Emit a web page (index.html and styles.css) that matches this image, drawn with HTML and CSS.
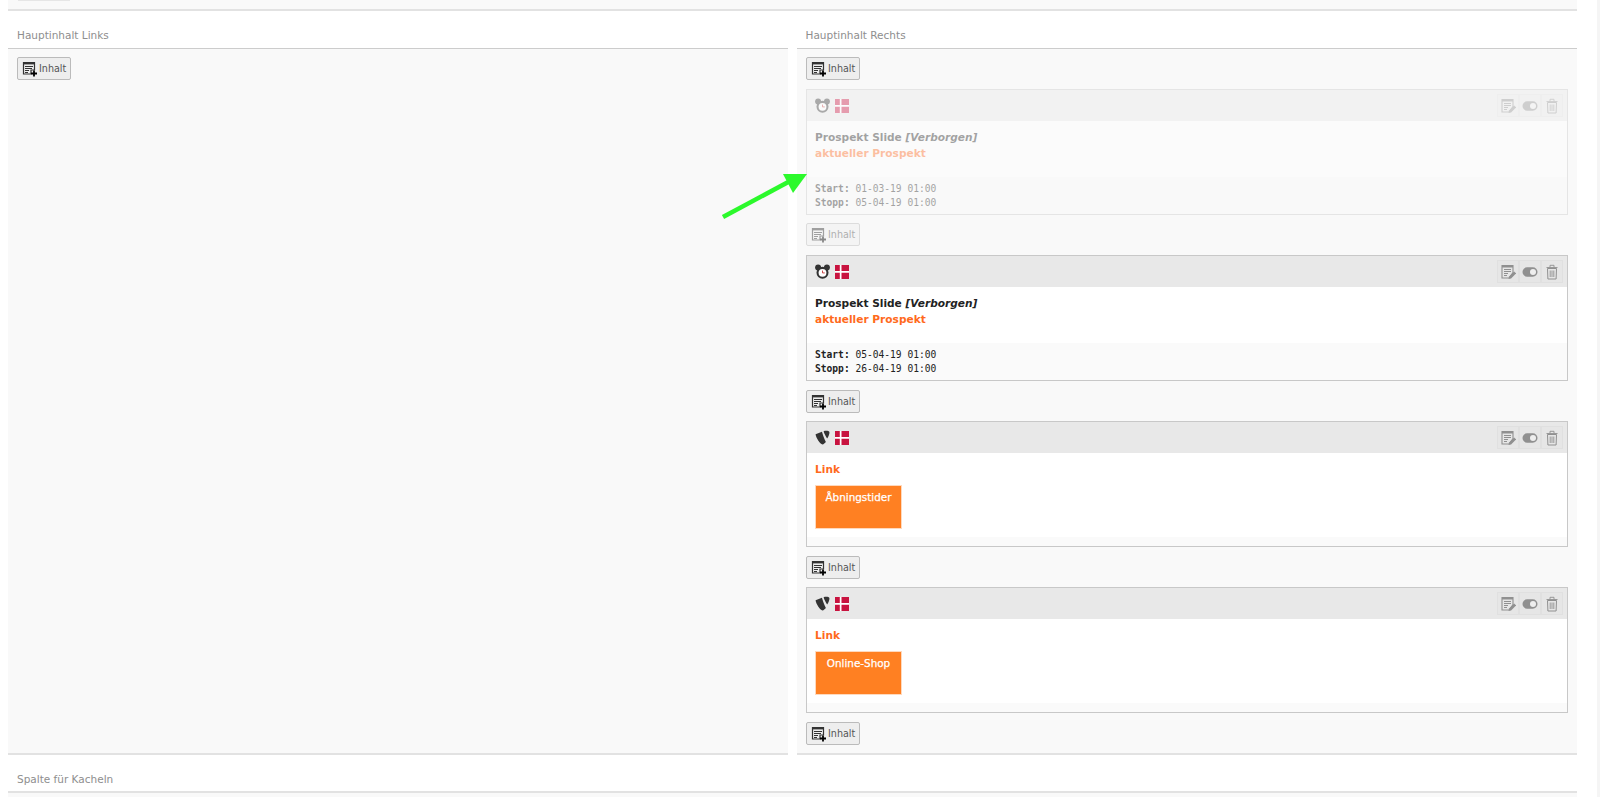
FILE: index.html
```html
<!DOCTYPE html>
<html lang="de">
<head>
<meta charset="utf-8">
<title>Seite</title>
<link rel="stylesheet" href="styles.css">
</head>
<body>
<svg class="defs" width="0" height="0" aria-hidden="true">
  <symbol id="i-add" viewBox="0 0 16 16">
    <path d="M1.500 1.500h11v7.500H9v4H1.500z" fill="none" stroke="currentColor" stroke-width="1.200"/>
    <path d="M1.500 1h11v2.400h-11z" fill="currentColor"/>
    <path d="M3 5.500h8M3 7.500h7M3 9.500h4M3 11.500h3" stroke="currentColor" stroke-width="1"/>
    <path d="M12 9.500v6M9 12.500h6" stroke="#000" stroke-width="1.800"/>
  </symbol>
  <symbol id="i-clock" viewBox="0 0 16 16">
    <circle cx="3.300" cy="3.700" r="3.200" fill="currentColor"/>
    <circle cx="12.700" cy="3.700" r="3.200" fill="currentColor"/>
    <circle cx="8" cy="9.400" r="6.400" fill="currentColor"/>
    <circle cx="8" cy="9.400" r="4.200" fill="#fff"/>
    <path d="M8 7v2.500h2.400" fill="none" stroke="#c83c3c" stroke-width="1"/>
  </symbol>
  <symbol id="i-typo" viewBox="0 0 16 16">
    <path d="M.6 4.600 7.400 1.800c.8 2.700 2.500 7.700 4.200 11-1 1-2.400 2.600-3.600 2.600C5.400 15.400.9 8 .6 4.600z" fill="currentColor"/>
    <path d="M9.200 1.200c2-.5 6-.5 6.200 1.100.1 1.600-1.200 5.200-2.500 6.800C11.400 6.800 9.600 3.200 9.200 1.200z" fill="currentColor"/>
  </symbol>
  <symbol id="i-flag" viewBox="0 0 14 14">
    <rect width="14" height="14" fill="#c8133f"/>
    <path d="M4.800 0h1.700v14H4.800zM0 6.100h14v1.700H0z" fill="#fff"/>
  </symbol>
  <symbol id="i-edit" viewBox="0 0 16 16">
    <path d="M2 1.500h11v7l-4 5.500H2z" fill="none" stroke="currentColor" stroke-width="1.100"/>
    <path d="M2 1.500h11v2H2z" fill="currentColor"/>
    <path d="M4 5.500h7M4 7.500h7M4 9.500h4M4 11.500h3" stroke="currentColor" stroke-width="1"/>
    <path d="M8.500 15l.6-2.600 5-5 2 2-5 5z" fill="currentColor"/>
  </symbol>
  <symbol id="i-toggle" viewBox="0 0 16 16">
    <rect x=".5" y="3.300" width="15" height="9.400" rx="4.700" fill="currentColor"/>
    <circle cx="11" cy="8" r="3" fill="#eee"/>
  </symbol>
  <symbol id="i-trash" viewBox="0 0 16 16">
    <path d="M3.500 4.500h9l-.4 10.500H3.900z" fill="none" stroke="currentColor" stroke-width="1"/>
    <path d="M2.500 3.500h11M6 3.300V1.300h4v2M6.200 6.500v6.500M8 6.500v6.500M9.800 6.500v6.500" fill="none" stroke="currentColor" stroke-width=".9"/>
  </symbol>
</svg>

<div class="page">
  <main class="main">
    <div class="prev-row"><span class="prev-btn"></span></div>

    <div class="columns">
      <section class="col">
        <h2 class="col-title">Hauptinhalt Links</h2>
        <div class="col-body">
          <button class="add-btn"><svg class="add-icon"><use href="#i-add"/></svg>Inhalt</button>
        </div>
      </section>

      <section class="col">
        <h2 class="col-title">Hauptinhalt Rechts</h2>
        <div class="col-body">
          <button class="add-btn"><svg class="add-icon"><use href="#i-add"/></svg>Inhalt</button>

          <article class="card is-hidden">
            <header class="card-head">
              <svg class="type-icon"><use href="#i-clock"/></svg>
              <svg class="flag"><use href="#i-flag"/></svg>
              <div class="actions">
                <span class="action"><svg><use href="#i-edit"/></svg></span>
                <span class="action"><svg><use href="#i-toggle"/></svg></span>
                <span class="action"><svg><use href="#i-trash"/></svg></span>
              </div>
            </header>
            <div class="card-body">
              <div class="text-block">
                <div class="title">Prospekt Slide <em>[Verborgen]</em></div>
                <div class="subtitle">aktueller Prospekt</div>
              </div>
            </div>
            <footer class="card-foot">
              <div class="sched"><strong>Start:</strong> 01-03-19 01:00</div>
              <div class="sched"><strong>Stopp:</strong> 05-04-19 01:00</div>
            </footer>
          </article>
          <button class="add-btn is-faded"><svg class="add-icon"><use href="#i-add"/></svg>Inhalt</button>

          <article class="card">
            <header class="card-head">
              <svg class="type-icon"><use href="#i-clock"/></svg>
              <svg class="flag"><use href="#i-flag"/></svg>
              <div class="actions">
                <span class="action"><svg><use href="#i-edit"/></svg></span>
                <span class="action"><svg><use href="#i-toggle"/></svg></span>
                <span class="action"><svg><use href="#i-trash"/></svg></span>
              </div>
            </header>
            <div class="card-body">
              <div class="text-block">
                <div class="title">Prospekt Slide <em>[Verborgen]</em></div>
                <div class="subtitle">aktueller Prospekt</div>
              </div>
            </div>
            <footer class="card-foot">
              <div class="sched"><strong>Start:</strong> 05-04-19 01:00</div>
              <div class="sched"><strong>Stopp:</strong> 26-04-19 01:00</div>
            </footer>
          </article>
          <button class="add-btn"><svg class="add-icon"><use href="#i-add"/></svg>Inhalt</button>

          <article class="card">
            <header class="card-head">
              <svg class="type-icon"><use href="#i-typo"/></svg>
              <svg class="flag"><use href="#i-flag"/></svg>
              <div class="actions">
                <span class="action"><svg><use href="#i-edit"/></svg></span>
                <span class="action"><svg><use href="#i-toggle"/></svg></span>
                <span class="action"><svg><use href="#i-trash"/></svg></span>
              </div>
            </header>
            <div class="card-body">
              <div class="text-block"><div class="subtitle">Link</div></div>
              <div class="tile">Åbningstider</div>
            </div>
            <footer class="card-foot"></footer>
          </article>
          <button class="add-btn"><svg class="add-icon"><use href="#i-add"/></svg>Inhalt</button>

          <article class="card">
            <header class="card-head">
              <svg class="type-icon"><use href="#i-typo"/></svg>
              <svg class="flag"><use href="#i-flag"/></svg>
              <div class="actions">
                <span class="action"><svg><use href="#i-edit"/></svg></span>
                <span class="action"><svg><use href="#i-toggle"/></svg></span>
                <span class="action"><svg><use href="#i-trash"/></svg></span>
              </div>
            </header>
            <div class="card-body">
              <div class="text-block"><div class="subtitle">Link</div></div>
              <div class="tile">Online-Shop</div>
            </div>
            <footer class="card-foot"></footer>
          </article>
          <button class="add-btn"><svg class="add-icon"><use href="#i-add"/></svg>Inhalt</button>
        </div>
      </section>
    </div>

    <section class="full-col">
      <h2 class="col-title">Spalte für Kacheln</h2>
      <div class="full-body"></div>
    </section>
  </main>
  <div class="rail"></div>
</div>

<svg class="arrow" width="100" height="60" viewBox="0 0 100 60" aria-hidden="true">
  <path d="M23 57 92 20" stroke="#2cf92c" stroke-width="4.600" fill="none"/>
  <path d="M83 14h24L93 33z" fill="#2cf92c"/>
</svg>
</body>
</html>
```

FILE: styles.css
```css
* { box-sizing: border-box; }
html, body { margin: 0; height: 100%; overflow: hidden; background: #fff; }
body {
  position: relative;
  font-family: "DejaVu Sans", Verdana, sans-serif;
  font-size: 11px;
  color: #333;
}
.defs { position: absolute; }

.page { display: flex; height: 797px; }
.main { width: 1597px; padding: 0 20px 0 8px; display: flex; flex-direction: column; }
.rail { width: 3px; background: #f5f5f5; }

.prev-row { height: 11px; flex: none; background: #f9f9f9; border-bottom: 2px solid #e2e2e2; padding-left: 10px; }
.prev-btn { display: block; width: 52px; height: 1px; background: #e6e6e6; }

.columns { display: grid; grid-template-columns: 780px 780px; grid-template-rows: 744px; column-gap: 9px; flex: none; }
.col { display: flex; flex-direction: column; min-height: 0; }
.col-title {
  margin: 0;
  height: 38px;
  flex: none;
  padding: 18px 0 0 9px;
  font-size: 10.500px;
  font-weight: 400;
  line-height: 13px;
  color: #8e8e8e;
  border-bottom: 1px solid #ccc;
}
.col + .col .col-title { padding-left: 8.500px; }
.col-body {
  flex: 1;
  min-height: 0;
  background: #f9f9f9;
  border-bottom: 2px solid #e2e2e2;
  padding: 8px 9px 0;
  display: flex;
  flex-direction: column;
  align-items: flex-start;
}

.full-col { flex: 1; display: flex; flex-direction: column; }
.full-col .col-title { border-bottom: 2px solid #e2e2e2; }
.full-body { flex: 1; background: #f9f9f9; }

.add-btn {
  display: flex;
  align-items: center;
  width: 54px;
  height: 23px;
  flex: none;
  margin: 0 0 8px;
  padding: 0 0 0 4px;
  border: 1px solid #bbb;
  border-radius: 2px;
  background: #eee;
  color: #555;
  font-family: inherit;
  font-size: 9.600px;
  line-height: 1;
}
.add-btn:first-child, .add-btn.is-faded { margin-bottom: 9px; }
.add-btn.is-faded { opacity: .45; }
.add-icon { width: 16px; height: 16px; margin-right: 1px; color: #333; flex: none; }

.card {
  width: 762px;
  height: 126px;
  flex: none;
  margin-bottom: 9px;
  border: 1px solid #c8c8c8;
  background: #fff;
  display: flex;
  flex-direction: column;
}
.card.is-hidden { opacity: .4; margin-bottom: 8px; }

.card-head {
  height: 31px;
  flex: none;
  background: #e8e8e8;
  display: flex;
  align-items: center;
  padding: 0 4px 0 8px;
}
.type-icon { width: 15px; height: 15px; color: #333; margin-right: 5px; flex: none; }
.flag { width: 14px; height: 14px; flex: none; }
.actions { margin-left: auto; display: flex; }
.action {
  width: 22px;
  height: 23px;
  background: #e6e6e6;
  border: 1px solid #e0e0e0;
  display: flex;
  align-items: center;
  justify-content: center;
  color: #909090;
}
.action svg { width: 16px; height: 16px; }

.card-body { flex: 1; padding: 8px; }
.text-block { margin-bottom: 8px; }
.title { font-size: 10.600px; font-weight: 700; line-height: 16px; color: #222; }
.title em { font-style: italic; }
.subtitle { font-size: 10.600px; font-weight: 700; line-height: 16px; color: #ff6a1c; }

.tile {
  width: 87px;
  height: 44px;
  background: #ff8022;
  border: 1px solid #ffd9bd;
  color: #fff;
  font-size: 10.400px;
  line-height: 14px;
  padding-top: 4px;
  text-align: center;
  -webkit-text-stroke: .25px #fff;
}

.card-foot { flex: none; min-height: 9px; padding: 5px 8px 4px; background: #fafafa; }
.sched { font-family: "DejaVu Sans Mono", monospace; font-size: 9.600px; line-height: 14px; color: #222; }

.arrow { position: absolute; left: 700px; top: 160px; overflow: visible; }
```
